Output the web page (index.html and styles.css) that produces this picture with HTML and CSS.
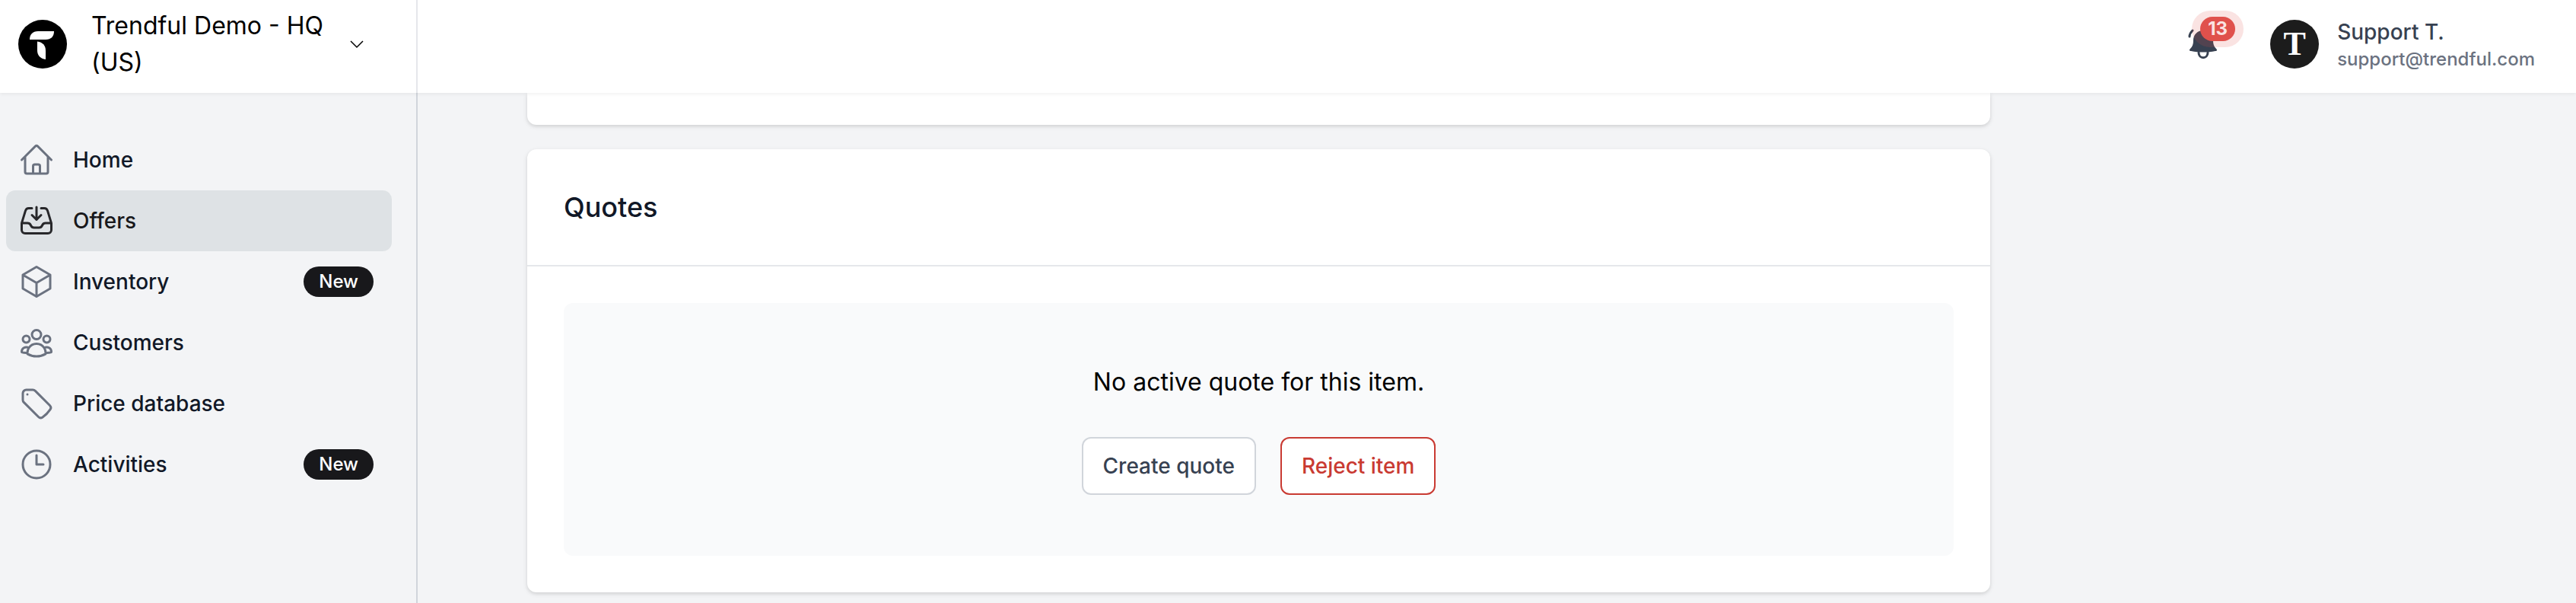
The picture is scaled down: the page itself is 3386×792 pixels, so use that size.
FILE: index.html
```html
<!DOCTYPE html>
<html lang="en">
<head>
    <meta charset="UTF-8">
    <meta name="viewport" content="width=device-width, initial-scale=1.0">
    <title>Offers</title>
    <link rel="stylesheet" href="styles.css">
</head>
<body>
    <header class="topbar">
        <button class="store-switch" type="button">
            <svg class="store-logo" viewBox="0 0 64 64" aria-hidden="true">
                <circle cx="32" cy="32" r="32" fill="#000"/>
                <path d="M15 26c0-7 4-11 11-11h21c0 7-4 11-11 11z" fill="#fff"/>
                <path d="M25 28.500c7 1 11 5 11 12v11.500c-7-1-11-5-11-12z" fill="#fff"/>
            </svg>
            <span class="store-name">Trendful Demo - HQ (US)</span>
            <svg class="chevron" viewBox="0 0 24 24" aria-hidden="true"><path d="M4 8l8 8 8-8"/></svg>
        </button>
        <div class="account">
            <button class="notifications" type="button" aria-label="Notifications">
                <svg class="bell" viewBox="0 0 48 48" aria-hidden="true">
                    <path d="M24 6c-8 0-13 6-13 13 0 5-1 8-4 11-2 2-1 3 1 3 10 2 22 2 32 0 2 0 3-1 1-3-3-3-4-6-4-11 0-7-5-13-13-13z"/>
                    <path class="bell-line" d="M18 35c0 9 12 9 12 0M6 14c0-3 2-6 4-8"/>
                </svg>
                <span class="count">13</span>
            </button>
            <a class="profile" href="#">
                <span class="avatar">T</span>
                <span class="profile-text">
                    <span class="profile-name">Support T.</span>
                    <span class="profile-mail">support@trendful.com</span>
                </span>
            </a>
        </div>
    </header>

    <div class="layout">
        <nav class="sidebar">
            <a class="nav-item" href="#">
                <svg class="icon" viewBox="0 0 24 24" aria-hidden="true"><path d="M2.250 12l8.954-8.955c.44-.439 1.152-.439 1.591 0L21.750 12M4.500 9.750v10.125c0 .621.504 1.125 1.125 1.125H9.750v-4.875c0-.621.504-1.125 1.125-1.125h2.250c.621 0 1.125.504 1.125 1.125V21h4.125c.621 0 1.125-.504 1.125-1.125V9.750M8.250 21h8.250"/></svg>
                <span>Home</span>
            </a>
            <a class="nav-item active" href="#">
                <svg class="icon" viewBox="0 0 24 24" aria-hidden="true"><path d="M9 3.750H6.912a2.250 2.250 0 00-2.150 1.588L2.350 13.177a2.250 2.250 0 00-.1.661V18a2.250 2.250 0 002.250 2.250h15A2.250 2.250 0 0021.750 18v-4.162c0-.224-.034-.447-.1-.661L19.240 5.338a2.250 2.250 0 00-2.150-1.588H15M2.250 13.500h3.860a2.250 2.250 0 012.012 1.244l.256.512a2.250 2.250 0 002.013 1.244h3.218a2.250 2.250 0 002.013-1.244l.256-.512a2.250 2.250 0 012.013-1.244h3.859M12 3v8.250m0 0l-3-3m3 3l3-3"/></svg>
                <span>Offers</span>
            </a>
            <a class="nav-item" href="#">
                <svg class="icon" viewBox="0 0 24 24" aria-hidden="true"><path d="M21 7.500l-9-5.250L3 7.500m18 0l-9 5.250m9-5.250v9l-9 5.250M3 7.500l9 5.250M3 7.500v9l9 5.250m0-9v9"/></svg>
                <span>Inventory</span>
                <span class="badge">New</span>
            </a>
            <a class="nav-item" href="#">
                <svg class="icon" viewBox="0 0 24 24" aria-hidden="true"><path d="M18 18.720a9.094 9.094 0 003.741-.479 3 3 0 00-4.682-2.720m.94 3.198l.001.031c0 .225-.012.447-.037.666A11.944 11.944 0 0112 21c-2.170 0-4.207-.576-5.963-1.584A6.062 6.062 0 016 18.719m12 0a5.971 5.971 0 00-.941-3.197m0 0A5.995 5.995 0 0012 12.750a5.995 5.995 0 00-5.058 2.772m0 0a3 3 0 00-4.681 2.720 8.986 8.986 0 003.740.477m.94-3.197a5.971 5.971 0 00-.94 3.197M15 6.750a3 3 0 11-6 0 3 3 0 016 0zm6 3a2.250 2.250 0 11-4.500 0 2.250 2.250 0 014.500 0zm-13.500 0a2.250 2.250 0 11-4.500 0 2.250 2.250 0 014.500 0z"/></svg>
                <span>Customers</span>
            </a>
            <a class="nav-item" href="#">
                <svg class="icon" viewBox="0 0 24 24" aria-hidden="true"><path d="M9.568 3H5.250A2.250 2.250 0 003 5.250v4.318c0 .597.237 1.170.659 1.591l9.581 9.581c.699.699 1.780.872 2.607.33a18.095 18.095 0 005.223-5.223c.542-.827.369-1.908-.33-2.607L11.160 3.660A2.250 2.250 0 009.568 3z"/><path d="M6 6h.008v.008H6V6z"/></svg>
                <span>Price database</span>
            </a>
            <a class="nav-item" href="#">
                <svg class="icon" viewBox="0 0 24 24" aria-hidden="true"><path d="M12 6v6h4.500m4.500 0a9 9 0 11-18 0 9 9 0 0118 0z"/></svg>
                <span>Activities</span>
                <span class="badge">New</span>
            </a>
        </nav>

        <main class="content">
            <div class="column">
                <section class="card card-end"></section>
                <section class="card">
                    <h2 class="card-title">Quotes</h2>
                    <div class="card-body">
                        <div class="empty">
                            <p class="empty-text">No active quote for this item.</p>
                            <div class="actions">
                                <button class="btn" type="button">Create quote</button>
                                <button class="btn btn-danger" type="button">Reject item</button>
                            </div>
                        </div>
                    </div>
                </section>
            </div>
        </main>
    </div>
</body>
</html>
```
FILE: styles.css
```css
* {
    box-sizing: border-box;
}

body {
    margin: 0;
    min-height: 100vh;
    display: flex;
    flex-direction: column;
    background-color: #f3f4f6;
    color: #000;
    font-family: Inter, sans-serif;
    font-size: 32px;
    line-height: 48px;
}

button {
    font-family: inherit;
    cursor: pointer;
}

a {
    color: inherit;
    text-decoration: none;
}

/* top bar */
.topbar {
    position: relative;
    z-index: 1;
    display: flex;
    justify-content: space-between;
    background-color: #fff;
    box-shadow: 0 2px 4px rgba(0, 0, 0, 0.05);
}

.store-switch {
    display: flex;
    align-items: center;
    width: 549px;
    padding: 10px 66px 16px 24px;
    border: none;
    border-right: 2px solid #e5e7eb;
    background-color: transparent;
    color: #000;
    font-size: 32px;
    line-height: 48px;
    text-align: left;
}

.store-logo {
    flex: none;
    width: 64px;
    height: 64px;
    margin-right: 32px;
}

.store-name {
    flex: 1;
}

.chevron {
    flex: none;
    width: 24px;
    height: 24px;
    fill: none;
    stroke: #000;
    stroke-width: 1.5;
}

.account {
    display: flex;
    align-items: center;
    padding: 10px 54px 16px 0;
}

.notifications {
    position: relative;
    width: 48px;
    height: 48px;
    margin-right: 64px;
    padding: 0;
    border: none;
    background-color: transparent;
}

.bell {
    display: block;
    width: 48px;
    height: 48px;
    fill: #374151;
}

.bell-line {
    fill: none;
    stroke: #374151;
    stroke-width: 3;
    stroke-linecap: round;
}

.count {
    position: absolute;
    top: -12px;
    left: 20px;
    padding: 0 10px;
    border-radius: 16px;
    background-color: #e0524d;
    color: #fff;
    font-size: 24px;
    font-weight: 700;
    line-height: 32px;
}

/* halo round the counter */
.count::before {
    content: "";
    position: absolute;
    inset: -8px -11px;
    border-radius: 24px;
    background-color: rgba(224, 82, 77, 0.16);
}

.profile {
    display: flex;
    align-items: center;
    gap: 24px;
    font-weight: 500;
}

.avatar {
    width: 64px;
    height: 64px;
    border-radius: 50%;
    background-color: #1c1c1c;
    color: #fff;
    font-family: "Liberation Serif", serif;
    font-size: 44px;
    font-weight: 700;
    line-height: 64px;
    text-align: center;
}

.profile-text {
    display: flex;
    flex-direction: column;
}

.profile-name {
    color: #374151;
    font-size: 28px;
    line-height: 40px;
}

.profile-mail {
    color: #6b7280;
    font-size: 24px;
    line-height: 32px;
}

/* sidebar */
.layout {
    flex: 1;
    display: flex;
}

.sidebar {
    flex: none;
    width: 549px;
    padding: 48px 32px 0 8px;
    border-right: 2px solid #d1d5db;
}

.nav-item {
    display: flex;
    align-items: center;
    gap: 24px;
    height: 80px;
    padding: 0 24px 0 16px;
    border-radius: 12px;
    color: #111827;
    font-size: 28px;
    font-weight: 500;
}

.icon {
    width: 48px;
    height: 48px;
    fill: none;
    stroke: #6b7280;
    stroke-width: 1.5;
    stroke-linecap: round;
    stroke-linejoin: round;
}

.active {
    background-color: #dee2e5;
    color: #18181b;
}

.active .icon {
    stroke: #27272a;
}

.badge {
    margin-left: auto;
    padding: 0 20px;
    border-radius: 20px;
    background-color: #18181b;
    color: #fff;
    font-size: 24px;
    line-height: 40px;
}

/* content */
.content {
    flex: 1;
    display: grid;
    grid-template-columns: 3fr 1fr;
    padding: 0 129px 14px 144px;
}

.card {
    border-radius: 12px;
    background-color: #fff;
    box-shadow: 0 2px 6px rgba(0, 0, 0, 0.1), 0 2px 4px rgba(0, 0, 0, 0.06);
}

.card-end {
    height: 42px;
    margin-bottom: 32px;
    border-radius: 0 0 12px 12px;
}

.card-title {
    margin: 0;
    padding: 48px;
    border-bottom: 2px solid #e5e7eb;
    color: #111827;
    font-size: 36px;
    font-weight: 500;
    line-height: 56px;
}

.card-body {
    padding: 48px;
}

.empty {
    padding: 80px 48px;
    border-radius: 12px;
    background-color: #f9fafb;
    text-align: center;
}

.empty-text {
    margin: 0 0 48px;
}

.actions {
    display: flex;
    justify-content: center;
    gap: 32px;
}

.btn {
    padding: 16px 26px;
    border: 2px solid #d1d5db;
    border-radius: 12px;
    background-color: #fff;
    color: #374151;
    font-size: 28px;
    font-weight: 500;
    line-height: 40px;
}

.btn-danger {
    border-color: #c93a32;
    color: #c93a32;
}
```
